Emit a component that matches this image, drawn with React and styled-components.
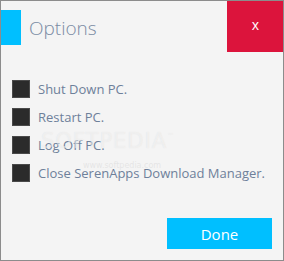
import React from "react";
import styled, { createGlobalStyle } from "styled-components";

const Global = createGlobalStyle`
  html, body { margin: 0; padding: 0; background: #f4f4f4; }
  body { font-family: "Open Sans", "Noto Sans", sans-serif; }
`;

const Window = styled.div`
  position: relative;
  box-sizing: border-box;
  width: 284px;
  height: 261px;
  border: 1px solid #8c8c8c;
  background: #f4f4f4;
  display: flex;
  flex-direction: column;
  overflow: hidden;
`;

const Header = styled.div`
  display: flex;
  align-items: flex-start;
  height: 52px;
  margin: -1px -1px 0 -1px;
`;

const Accent = styled.div`
  width: 21px;
  height: 35px;
  margin-top: 10px;
  background: #00bfff;
  flex: none;
`;

const Title = styled.div`
  margin-left: 8px;
  margin-top: 15px;
  font-size: 19px;
  font-weight: 300;
  color: #7a8ba3;
  line-height: 26px;
  flex: 1;
`;

const Close = styled.button`
  width: 57px;
  height: 52px;
  border: none;
  background: #dc143c;
  color: #fff;
  font-family: "Open Sans", sans-serif;
  font-size: 14px;
  line-height: 1;
  padding: 0 0 2px 0;
  flex: none;
`;

const List = styled.div`
  display: flex;
  flex-direction: column;
  margin-top: 23px;
  padding-left: 11px;
`;

const Row = styled.label`
  display: flex;
  align-items: center;
  height: 28px;
  gap: 8px;
`;

const Box = styled.span`
  box-sizing: border-box;
  width: 18px;
  height: 18px;
  background: #2b2b2b;
  border: 1px solid #4a4a4a;
  flex: none;
`;

const Label = styled.span`
  font-size: 13px;
  color: #6e809a;
  white-space: nowrap;
`;

const Footer = styled.div`
  margin-top: auto;
  display: flex;
  justify-content: flex-end;
  padding: 0 11px 11px 0;
`;

const Done = styled.button`
  width: 105px;
  height: 31px;
  border: none;
  background: #00bfff;
  color: #fff;
  font-family: "Open Sans", sans-serif;
  font-size: 15px;
  padding: 0;
`;

const Watermark = styled.div`
  position: absolute;
  left: 40px;
  top: 128px;
  font-family: "DejaVu Sans", sans-serif;
  font-size: 21px;
  letter-spacing: 1px;
  color: rgba(255, 255, 255, 0.45);
  text-shadow: 0 0 1px rgba(170, 170, 170, 0.25);
  pointer-events: none;
`;

const Tm = styled.sup`
  font-size: 7px;
  vertical-align: 10px;
`;

const WatermarkUrl = styled.div`
  position: absolute;
  left: 82px;
  top: 160px;
  font-family: "DejaVu Sans", sans-serif;
  font-size: 8px;
  color: rgba(205, 205, 205, 0.4);
  pointer-events: none;
`;

const items = [
  "Shut Down PC.",
  "Restart PC.",
  "Log Off PC.",
  "Close SerenApps Download Manager.",
];

export default function App() {
  return (
    <>
      <Global />
      <Window>
        <Header>
          <Accent />
          <Title>Options</Title>
          <Close>x</Close>
        </Header>
        <List>
          {items.map((t) => (
            <Row key={t}>
              <Box />
              <Label>{t}</Label>
            </Row>
          ))}
        </List>
        <Footer>
          <Done>Done</Done>
        </Footer>
        <Watermark>
          SOFTPEDIA<Tm>™</Tm>
        </Watermark>
        <WatermarkUrl>www.softpedia.com</WatermarkUrl>
      </Window>
    </>
  );
}
